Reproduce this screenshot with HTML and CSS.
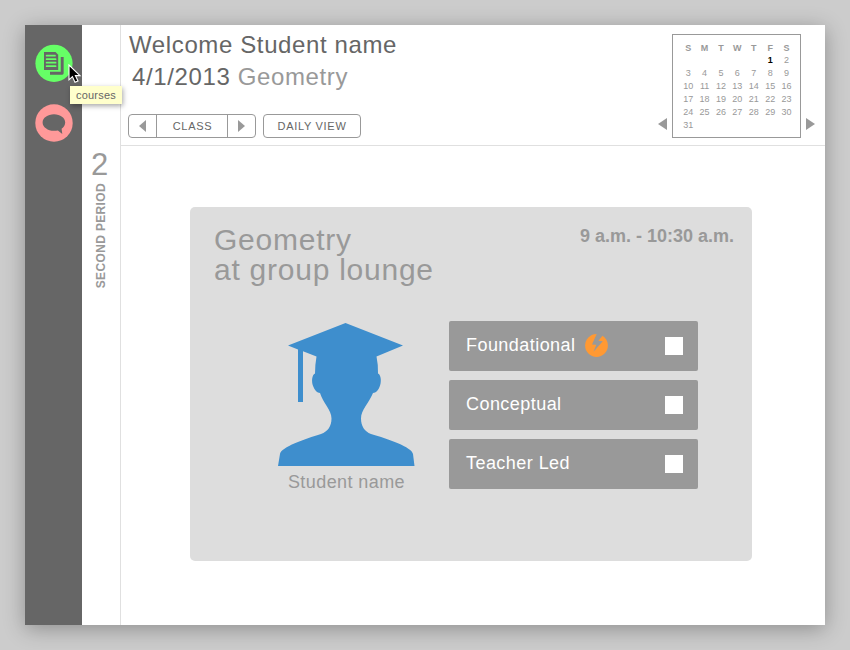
FILE: index.html
```html
<!DOCTYPE html>
<html lang="en">
<head>
<meta charset="utf-8">
<title>Student planner</title>
<link rel="stylesheet" href="styles.css">
</head>
<body>
<div class="window">
  <nav class="sidebar">
    <a class="nav-item">
      <svg width="38" height="38" viewBox="0 0 38 38"><circle cx="19" cy="19.300" r="18.6" fill="#6f6"/><path d="M9 8h11.500l2.700 2.700V26H9z" fill="#666"/><path d="M11.600 11.700h8.400M11.600 15.200h9M11.600 18.700h9M11.600 22.200h9" stroke="#6f6" stroke-width="1.700" stroke-linecap="round"/><path d="M27.200 13v16.200H15" fill="none" stroke="#666" stroke-width="2.900" stroke-linejoin="round"/></svg>
      <svg class="cursor" width="14" height="20" viewBox="0 0 14 20"><path d="M1 1v14.800l3.400-3.200 2.600 5.600 3-1.300-2.600-5.300H12z" fill="#000" stroke="#fff" stroke-width="1.100"/></svg>
      <span class="tooltip">courses</span>
    </a>
    <a class="nav-item">
      <svg width="38" height="38" viewBox="0 0 38 38"><circle cx="19" cy="19" r="18.7" fill="#f99"/><path d="M19 10.300c6.300 0 11.200 3.600 11.200 8.200 0 2.600-1.400 4.800-3.600 6.300l.7 5.200-4.400-3.600c-1.200.3-2.600.4-3.900.4-6.300 0-11.400-3.700-11.400-8.300s5.100-8.200 11.400-8.200z" fill="#666"/></svg>
    </a>
  </nav>
  <aside class="period">
    <div class="period-number">2</div>
    <div class="period-name">SECOND PERIOD</div>
  </aside>
  <main class="main">
    <header class="header">
      <div class="intro">
        <h1 class="welcome">Welcome Student name</h1>
        <h2 class="date">4/1/2013 <span class="subject">Geometry</span></h2>
        <div class="controls">
          <div class="switcher">
            <span class="step"><svg width="7" height="12"><path d="M7 0v12L0 6z" fill="#999"/></svg></span>
            <span class="step-label">CLASS</span>
            <span class="step"><svg width="7" height="12"><path d="M0 0v12l7-6z" fill="#999"/></svg></span>
          </div>
          <div class="view">DAILY VIEW</div>
        </div>
      </div>
      <div class="calendar-nav">
        <svg class="cal-arrow" width="9" height="12"><path d="M9 0v12L0 6z" fill="#999"/></svg>
        <div class="calendar">
          <b>S</b><b>M</b><b>T</b><b>W</b><b>T</b><b>F</b><b>S</b>
          <span class="today">1</span><span>2</span>
          <span>3</span><span>4</span><span>5</span><span>6</span><span>7</span><span>8</span><span>9</span>
          <span>10</span><span>11</span><span>12</span><span>13</span><span>14</span><span>15</span><span>16</span>
          <span>17</span><span>18</span><span>19</span><span>20</span><span>21</span><span>22</span><span>23</span>
          <span>24</span><span>25</span><span>26</span><span>27</span><span>28</span><span>29</span><span>30</span>
          <span>31</span>
        </div>
        <svg class="cal-arrow" width="9" height="12"><path d="M0 0v12l9-6z" fill="#999"/></svg>
      </div>
    </header>
    <section class="card">
      <div class="card-head">
        <h3 class="card-title">Geometry<br>at group lounge</h3>
        <div class="time">9 a.m. - 10:30 a.m.</div>
      </div>
      <div class="card-body">
        <figure class="student">
          <svg width="137" height="143" viewBox="0 0 137 143"><path fill="#3e8ecd" d="M67.500 0L125 22.500 98.500 33.500Q100.300 42 100 50.500C103.500 52 103.500 60 101.500 64Q99.500 69.500 95 70C91 80 83 87 83 95.500C83 103 86.500 108.500 93 111C110 116 134 124 135 131L136.500 143H0L2 131C3 124 27 116 43 111C50 108.500 53.500 103 53.500 95.500C53.500 87 45 80 42 70Q37.500 69.500 35.500 64C33 59 34 51.500 37 50.500Q37 42 38.500 33.500L25 28.300V79H20V26.500L10 22.500Z"/></svg>
          <figcaption class="student-name">Student name</figcaption>
        </figure>
        <div class="options">
          <label class="option"><span class="option-label">Foundational</span><svg class="bolt" width="23" height="23" viewBox="0 0 23 23"><circle cx="11.500" cy="11.500" r="11.400" fill="#f93"/><path d="M11.900-.5L7 10.400l4.300.4-2.800 7L17.800 7.200 13.400 6.800 18.500.5z" fill="#999"/></svg><span class="box"></span></label>
          <label class="option"><span class="option-label">Conceptual</span><span class="box"></span></label>
          <label class="option"><span class="option-label">Teacher Led</span><span class="box"></span></label>
        </div>
      </div>
    </section>
  </main>
</div>
</body>
</html>
```
FILE: styles.css
```css
* { box-sizing: border-box; }
body { margin: 0; padding: 25px; height: 650px; overflow: hidden; background: #ccc; font-family: "Liberation Sans", Arial, sans-serif; color: #666; }
h1, h2, h3, figure { margin: 0; font-weight: normal; }
svg { display: block; flex: none; }
.window { display: flex; width: 800px; height: 600px; background: #fff; box-shadow: 0 4px 20px rgba(0, 0, 0, .3); }
.sidebar { width: 57px; background: #666; padding: 19px 0 0 10px; display: flex; flex-direction: column; gap: 22px; }
.nav-item { position: relative; width: 38px; height: 38px; }
.cursor { position: absolute; left: 33px; top: 20px; z-index: 2; }
.tooltip { position: absolute; left: 35px; top: 42px; width: 52px; height: 18px; background: #ffc; font-size: 11px; line-height: 18px; letter-spacing: .2px; padding-left: 6px; box-shadow: 1px 2px 5px rgba(0, 0, 0, .35); }
.period { width: 39px; border-right: 1px solid #e0e0e0; color: #999; padding-top: 122px; display: flex; flex-direction: column; align-items: center; }
.period-number { font-size: 31px; line-height: 36px; margin-right: 3px; }
.period-name { writing-mode: vertical-rl; transform: rotate(180deg); font-size: 12px; line-height: 14px; font-weight: bold; letter-spacing: .35px; margin-right: 1px; }
.main { width: 704px; }
.header { height: 121px; border-bottom: 1px solid #e0e0e0; display: flex; justify-content: space-between; }
.intro { padding: 4px 0 0 7px; }
.welcome { font-size: 24px; line-height: 32px; letter-spacing: .62px; padding-left: 1px; white-space: nowrap; }
.date { font-size: 24px; line-height: 32px; letter-spacing: .62px; padding-left: 4px; white-space: nowrap; }
.subject { color: #999; }
.controls { display: flex; gap: 7px; margin-top: 21px; font-size: 11px; letter-spacing: .7px; }
.switcher, .view { height: 24px; border: 1px solid #999; border-radius: 4px; display: flex; }
.switcher { width: 128px; }
.step { width: 27px; display: flex; align-items: center; justify-content: center; }
.step-label { flex: 1; border: solid #999; border-width: 0 1px; padding-left: 1px; text-align: center; line-height: 22px; }
.view { width: 98px; justify-content: center; line-height: 22px; }
.calendar-nav { display: flex; align-items: flex-end; gap: 5px; padding: 9px 10px 7px 0; }
.cal-arrow { margin-bottom: 8px; }
.calendar { width: 129px; height: 104px; border: 1px solid #999; padding: 7px 5px 0 7px; display: grid; grid-template-columns: repeat(7, 16.400px); grid-template-rows: 12px repeat(6, 13px); font-size: 9px; line-height: 13px; text-align: center; color: #999; }
.today { grid-column: 6; color: #000; font-weight: bold; }
.card { width: 562px; height: 354px; margin: 61px 0 0 69px; background: #ddd; border-radius: 5px; color: #999; }
.card-head { display: flex; justify-content: space-between; padding: 18px 18px 0 24px; }
.card-title { font-size: 30px; line-height: 30px; letter-spacing: .75px; }
.time { font-size: 18px; line-height: 22px; font-weight: bold; }
.card-body { display: flex; padding: 35.500px 54px 0 88px; justify-content: space-between; }
.student { width: 137px; padding-top: 2px; }
.student-name { font-size: 18px; line-height: 22px; letter-spacing: .42px; margin-top: 5px; text-align: center; white-space: nowrap; }
.options { display: flex; flex-direction: column; gap: 9px; }
.option { width: 249px; height: 50px; background: #999; border-radius: 2px; display: flex; align-items: center; padding: 0 15px 0 17px; color: #fff; }
.option-label { font-size: 18px; letter-spacing: .45px; margin-top: -1px; }
.bolt { margin-left: 9.500px; }
.box { width: 18px; height: 18px; background: #fff; margin-left: auto; }
```
